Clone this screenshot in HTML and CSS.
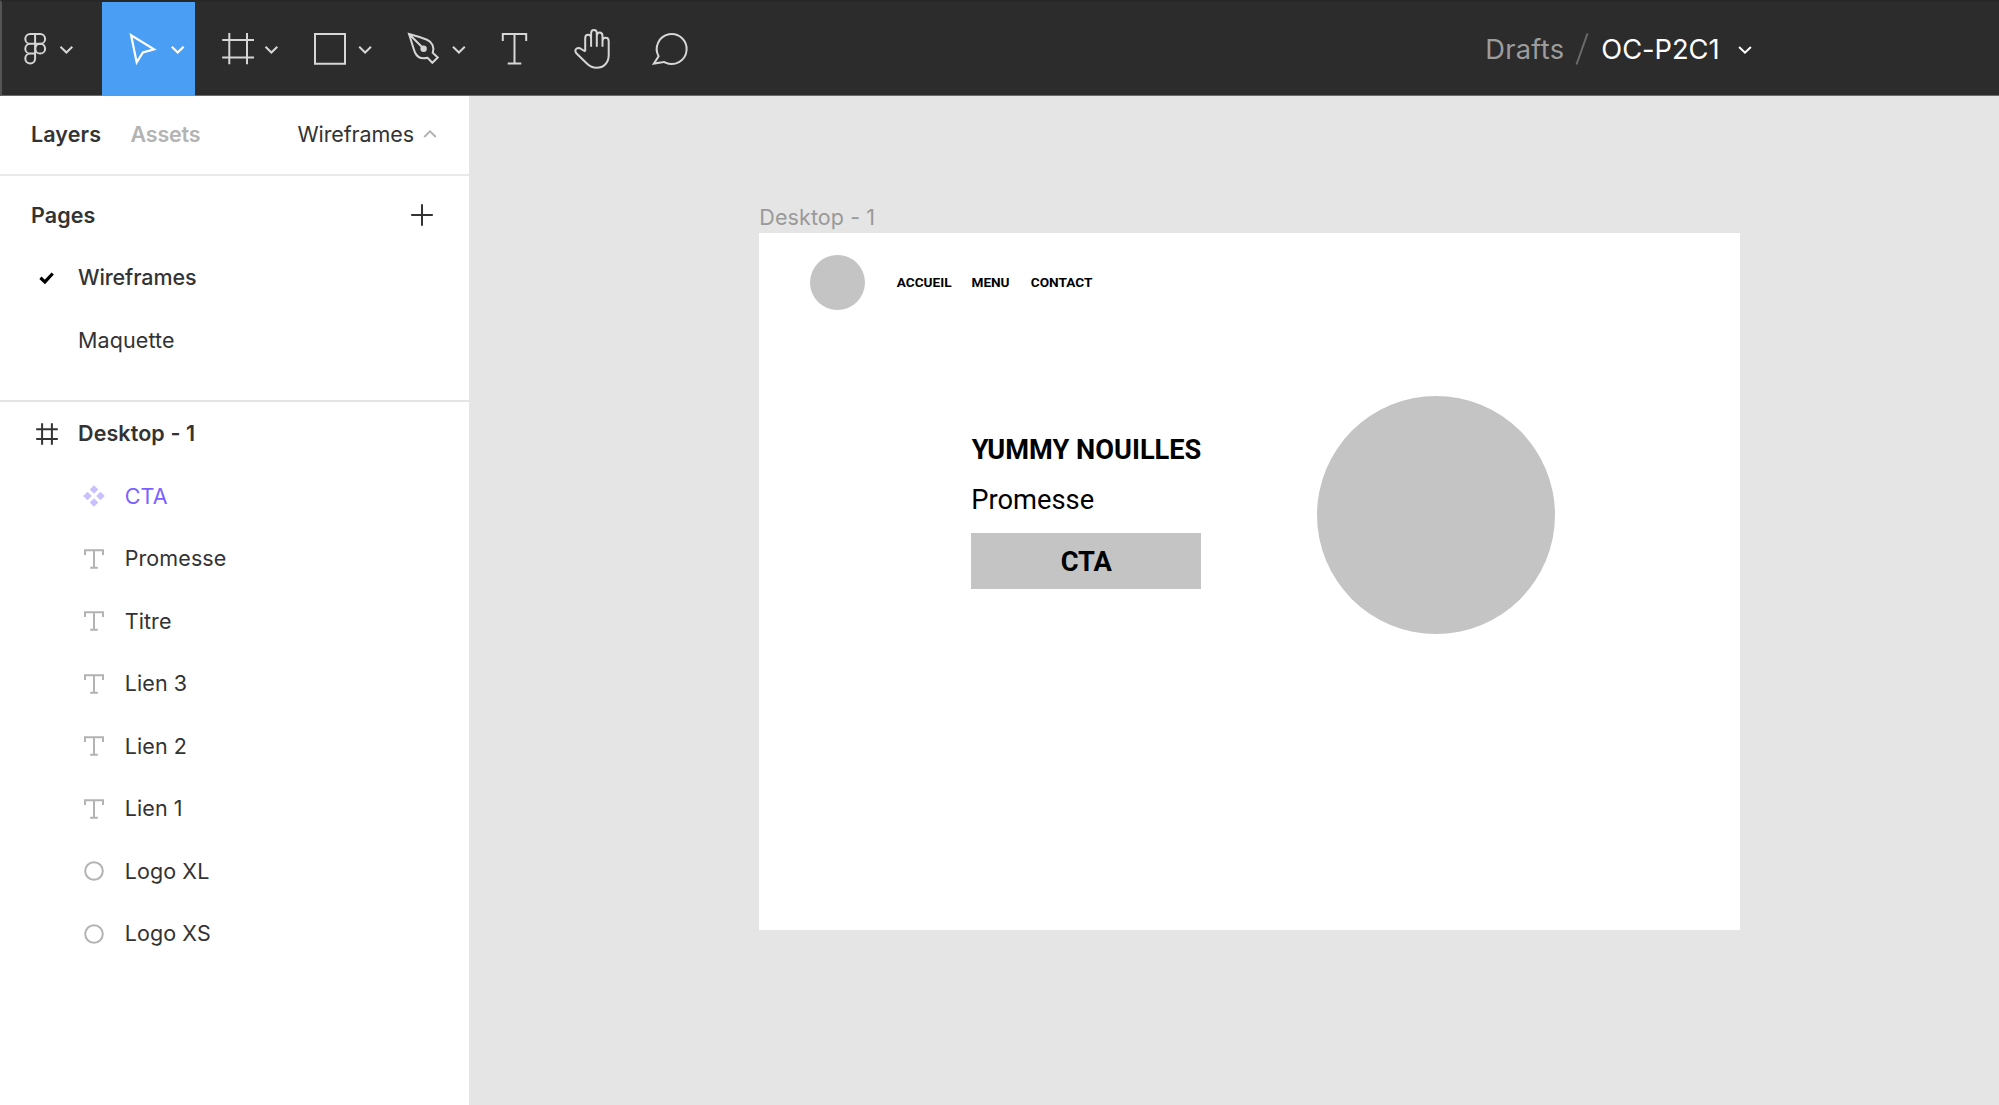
FILE: index.html
```html
<!DOCTYPE html>
<html lang="fr">
<head>
<meta charset="utf-8">
<title>OC-P2C1</title>
<link rel="stylesheet" href="styles.css">
</head>
<body>
<svg class="defs" width="0" height="0" aria-hidden="true">
  <symbol id="text-layer" viewBox="0 0 22 22"><path d="M2 7V2.2h18V7M11 2.2v17.6M7.2 19.8h7.6"/></symbol>
  <symbol id="ellipse-layer" viewBox="0 0 22 22"><circle cx="11" cy="11" r="8.8"/></symbol>
</svg>
<header class="toolbar">
  <nav class="tools">
    <button class="tool tool-menu" aria-label="Menu"><svg viewBox="0 0 102 96"><path d="M35.1 34h-4.9a4.9 4.9 0 0 0 0 9.8h4.9zM35.1 34h5.1a4.9 4.9 0 0 1 0 9.8h-5.1M35.1 43.8h-4.9a4.9 4.9 0 0 0 0 9.8h4.9zM35.1 53.6h-4.9a4.9 4.9 0 1 0 4.9 4.9z"/><circle cx="40.2" cy="48.7" r="4.9"/><path d="M60.5 46.8l5.9 5.7 5.9-5.7"/></svg></button>
    <button class="tool tool-active" aria-label="Move"><svg viewBox="102 0 93 96"><path d="M131.1 35.3l23 14-11.2 3.2-6.2 9.9zM171.8 46.8l5.9 5.7 5.9-5.7"/></svg></button>
    <button class="tool" aria-label="Frame"><svg viewBox="195 0 94 96"><path d="M229.3 33v31.3M247 33v31.3M222.2 40h31.8M222.2 57.6h31.8M265.5 46.8l5.9 5.7 5.9-5.7"/></svg></button>
    <button class="tool" aria-label="Rectangle"><svg viewBox="289 0 94 96"><path d="M315 34h30v29.8h-30zM359.2 46.8l5.9 5.7 5.9-5.7"/></svg></button>
    <button class="tool" aria-label="Pen"><svg viewBox="383 0 94 96"><path d="M409 34c7 1.8 12.6 3.6 18 5.8 5.4 2.3 7.6 7.8 5.7 13l5.1 4.7-5.5 5.3-4.7-5c-5.6 1.4-10.3-.3-12.6-5.3-2.1-5.3-3.4-10.8-6-18.5zl14.5 14.5"/><circle class="dot" cx="423.6" cy="48.7" r="2.2"/><path d="M453 46.8l5.9 5.7 5.9-5.7"/></svg></button>
    <button class="tool tool-text" aria-label="Text"><svg viewBox="477 0 76 96"><path d="M502.8 41v-7h23.4v7M514.5 34v29.6M507.7 63.6h13.6"/></svg></button>
    <button class="tool tool-hand" aria-label="Hand"><svg viewBox="553 0 78 96"><path d="M585.2 51.5V38.3c0-4.6 5.9-4.6 5.9 0v8.4M591.1 46.7V33.2c0-4.4 5.7-4.4 5.7 0v13.5M596.8 46.7V36c0-4.7 5.7-4.7 5.7 0v10.7M602.5 46.7v-5.5c0-4.5 6.2-4.5 6.2 0V55c0 7.6-4.8 12.8-12.3 12.8-4.2 0-6.8-1.7-9.8-4.6l-10-9.7c-3.6-4.2 1.4-6.8 4.6-4.5l4 2.5"/></svg></button>
    <button class="tool tool-comment" aria-label="Comment"><svg viewBox="631 0 78 96"><path d="M653.9 63.6l4.7-7.4a14.95 14.95 0 1 1 6.9 6.4c-1-.8-2.2-.5-3.2-.3z"/></svg></button>
  </nav>
  <div class="crumbs">
    <span class="crumb-folder">Drafts</span>
    <svg class="crumb-slash" viewBox="0 0 14 34"><path d="M1.5 32.5L12.5 1.5"/></svg>
    <span class="crumb-file">OC-P2C1</span>
    <svg class="crumb-chevron" viewBox="0 0 14 10"><path d="M1.1 2l5.9 5.7L12.9 2"/></svg>
  </div>
</header>
<div class="workspace">
  <aside class="sidebar">
    <div class="tabs">
      <span class="tab strong">Layers</span>
      <span class="tab strong tab-muted">Assets</span>
      <span class="page-switch">Wireframes</span>
      <svg class="switch-chevron" viewBox="0 0 14 10"><path d="M1.2 8L7 2.3 12.8 8"/></svg>
    </div>
    <section class="pages">
      <div class="row row-title"><span class="strong">Pages</span><svg class="icon" viewBox="0 0 22 22"><path d="M11 .2v21.6M.2 11h21.6"/></svg></div>
      <div class="row row-root"><svg class="icon icon-check" viewBox="0 0 22 22"><path d="M4.4 10.8l4.5 4.1 7.8-8.4"/></svg><span class="medium">Wireframes</span></div>
      <div class="row row-root"><span class="icon"></span><span>Maquette</span></div>
    </section>
    <section class="layers">
      <div class="row row-root"><svg class="icon" viewBox="0 0 22 22"><path d="M6.1.3v21.4M15.9.3v21.4M.2 6.2h21.6M.2 15.9h21.6"/></svg><span class="strong">Desktop - 1</span></div>
      <div class="row row-child row-component"><svg class="icon" viewBox="0 0 22 22"><path d="M11 .2l4.3 4.3L11 8.8 6.7 4.5zM11 13.2l4.3 4.3-4.3 4.3-4.3-4.3zM4.5 6.7L8.8 11l-4.3 4.3L.2 11zM17.5 6.7l4.3 4.3-4.3 4.3-4.3-4.3z"/></svg><span>CTA</span></div>
      <div class="row row-child"><svg class="icon"><use href="#text-layer"/></svg><span>Promesse</span></div>
      <div class="row row-child"><svg class="icon"><use href="#text-layer"/></svg><span>Titre</span></div>
      <div class="row row-child"><svg class="icon"><use href="#text-layer"/></svg><span>Lien 3</span></div>
      <div class="row row-child"><svg class="icon"><use href="#text-layer"/></svg><span>Lien 2</span></div>
      <div class="row row-child"><svg class="icon"><use href="#text-layer"/></svg><span>Lien 1</span></div>
      <div class="row row-child"><svg class="icon"><use href="#ellipse-layer"/></svg><span>Logo XL</span></div>
      <div class="row row-child"><svg class="icon"><use href="#ellipse-layer"/></svg><span>Logo XS</span></div>
    </section>
  </aside>
  <main class="canvas">
    <div class="frame-label">Desktop - 1</div>
    <div class="frame">
      <div class="node logo-xs"></div>
      <div class="node link link-1">ACCUEIL</div>
      <div class="node link link-2">MENU</div>
      <div class="node link link-3">CONTACT</div>
      <div class="node title">YUMMY NOUILLES</div>
      <div class="node promise">Promesse</div>
      <div class="node cta">CTA</div>
      <div class="node logo-xl"></div>
    </div>
  </main>
</div>
</body>
</html>
```
FILE: styles.css
```css
* { box-sizing: border-box; }

body {
  margin: 0;
  height: 1105px;
  overflow: hidden;
  display: flex;
  flex-direction: column;
  background: #e5e5e5;
  color: #333;
  font: 400 21.5px/1.2 Inter, sans-serif;
  letter-spacing: .1px;
}

svg { display: block; flex: none; fill: none; stroke: currentColor; stroke-width: 2; }
.defs { position: absolute; }

/* Toolbar */
.toolbar {
  flex: none;
  display: flex;
  justify-content: space-between;
  height: 96px;
  background: #2c2c2c;
  border-top: 2px solid #272727;
  border-bottom: 1px solid #6a6a6a;
  border-left: 2px solid #555;
}
.tools { display: flex; margin-left: -2px; }
.tool {
  width: 94px;
  height: 94px;
  padding: 0;
  border: 0;
  background: none;
  color: #d6d6d6;
}
.tool svg { width: 100%; height: 96px; margin-top: -2px; stroke-width: 2; }
.tool-menu { width: 102px; }
.tool-active { width: 93px; background: #4a9ff5; color: #fff; }
.tool-active svg { stroke-width: 2.2; }
.tool-text { width: 76px; }
.tool-hand, .tool-comment { width: 78px; }
.dot { fill: currentColor; }

.crumbs {
  display: flex;
  align-items: center;
  height: 95px;
  padding-right: 247px;
  font-size: 27.3px;
}
.crumbs span { padding-top: 1px; }
.crumb-folder { color: #9c9c9c; letter-spacing: .25px; }
.crumb-slash { width: 14px; height: 34px; margin: -1px 12px 0 11px; color: #6b6b6b; }
.crumb-file { color: #fff; letter-spacing: -.05px; }
.crumb-chevron { width: 14px; height: 10px; margin: 1px 0 0 18.5px; color: #fff; }

/* Sidebar */
.workspace { flex: 1; display: flex; min-height: 0; }
.sidebar { flex: none; width: 469px; background: #fff; }
.strong { font-weight: 600; }
.medium { font-weight: 500; letter-spacing: -.1px; }

.tabs {
  display: flex;
  align-items: center;
  height: 80px;
  padding: 0 32.5px 0 31px;
  border-bottom: 2px solid #e9e9e9;
}
.tab-muted { margin-left: 29.5px; color: #b3b3b3; letter-spacing: -.2px; }
.page-switch { margin-left: auto; letter-spacing: -.1px; }
.switch-chevron { width: 14px; height: 10px; margin: -3px 0 0 8.5px; color: #b3b3b3; }

.pages { height: 226px; padding-top: 8px; border-bottom: 2px solid #e4e4e4; }
.layers { padding-top: .5px; }
.row { display: flex; align-items: center; height: 62.5px; }
.row span { padding-top: 1px; }
.row-title { justify-content: space-between; padding: 0 36.5px 0 31px; }
.row-root { gap: 20px; padding-left: 36px; }
.row-child { gap: 20px; padding-left: 82.7px; }
.icon { width: 22px; height: 22px; flex: none; }
.icon-check { color: #000; stroke-width: 3.2; }
.row-child .icon { color: #b3b3b3; }
.row-component { color: #7b61ff; }
.row-component .icon { color: #cac0fd; fill: currentColor; stroke: none; }

/* Canvas */
.canvas { flex: 1; padding: 108px 0 0 290.3px; }
.frame-label { height: 29px; line-height: 26px; color: #999; letter-spacing: .1px; }
.frame {
  position: relative;
  width: 980.4px;
  height: 697px;
  background: #fff;
  color: #000;
  font-family: Roboto, sans-serif;
  letter-spacing: 0;
}
.node { position: absolute; white-space: nowrap; }
.logo-xs { left: 50.7px; top: 22.4px; width: 55px; height: 55px; border-radius: 50%; background: #c4c4c4; }
.logo-xl { left: 557.7px; top: 162.5px; width: 238.5px; height: 238.5px; border-radius: 50%; background: #c4c4c4; }
.link { top: 41px; font-size: 13.6px; line-height: 16px; font-weight: 700; }
.link-1 { left: 137.5px; }
.link-2 { left: 212.2px; }
.link-3 { left: 271.5px; }
.title { left: 212.5px; top: 201px; font-size: 27.2px; line-height: 32px; font-weight: 700; }
.promise { left: 212px; top: 250.5px; font-size: 27.3px; line-height: 32px; }
.cta {
  left: 212px;
  top: 300px;
  width: 230px;
  height: 56px;
  background: #c4c4c4;
  font-size: 27.3px;
  font-weight: 700;
  line-height: 58px;
  text-align: center;
}
```
